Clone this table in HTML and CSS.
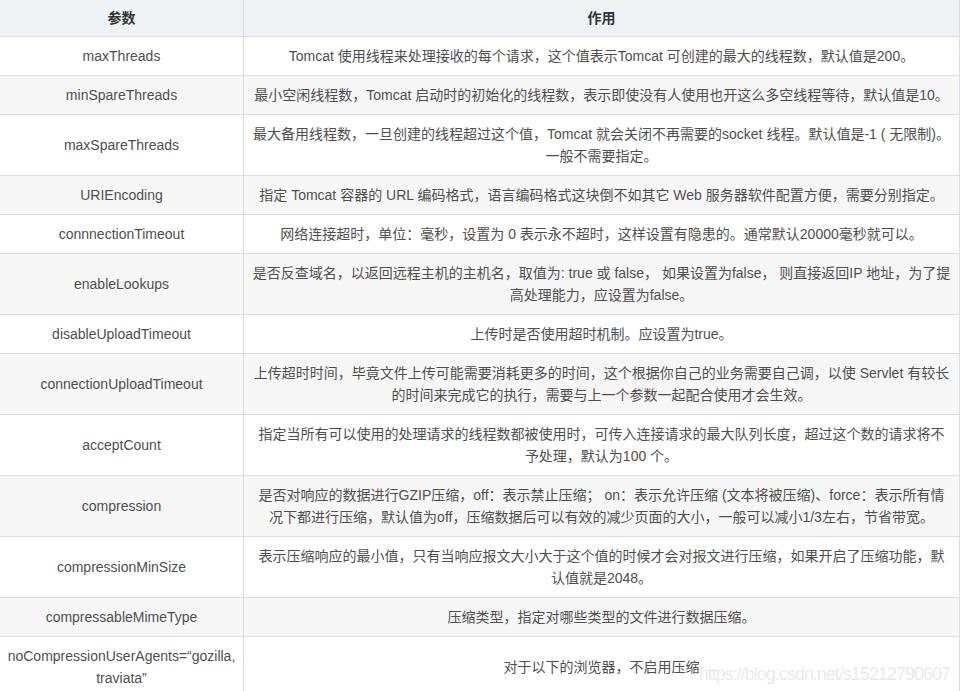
FILE: index.html
```html
<!DOCTYPE html>
<html lang="zh-CN">
<head>
<meta charset="utf-8">
<title>Tomcat 参数</title>
<link rel="stylesheet" href="styles.css">
</head>
<body>
<div class="page">
<table class="params">
  <colgroup><col class="col-name"><col class="col-desc"></colgroup>
  <thead>
    <tr><th>参数</th><th>作用</th></tr>
  </thead>
  <tbody>
    <tr><td>maxThreads</td><td>Tomcat 使用线程来处理接收的每个请求，这个值表示Tomcat 可创建的最大的线程数，默认值是200。</td></tr>
    <tr><td>minSpareThreads</td><td>最小空闲线程数，Tomcat 启动时的初始化的线程数，表示即使没有人使用也开这么多空线程等待，默认值是10。</td></tr>
    <tr><td>maxSpareThreads</td><td>最大备用线程数，一旦创建的线程超过这个值，Tomcat 就会关闭不再需要的socket 线程。默认值是-1 ( 无限制)。<br>一般不需要指定。</td></tr>
    <tr><td>URIEncoding</td><td>指定 Tomcat 容器的 URL 编码格式，语言编码格式这块倒不如其它 Web 服务器软件配置方便，需要分别指定。</td></tr>
    <tr><td>connnectionTimeout</td><td>网络连接超时，单位：毫秒，设置为 0 表示永不超时，这样设置有隐患的。通常默认20000毫秒就可以。</td></tr>
    <tr><td>enableLookups</td><td>是否反查域名，以返回远程主机的主机名，取值为: true 或 false， 如果设置为false， 则直接返回IP 地址，为了提<br>高处理能力，应设置为false。</td></tr>
    <tr><td>disableUploadTimeout</td><td>上传时是否使用超时机制。应设置为true。</td></tr>
    <tr><td>connectionUploadTimeout</td><td>上传超时时间，毕竟文件上传可能需要消耗更多的时间，这个根据你自己的业务需要自己调，以使 Servlet 有较长<br>的时间来完成它的执行，需要与上一个参数一起配合使用才会生效。</td></tr>
    <tr><td>acceptCount</td><td>指定当所有可以使用的处理请求的线程数都被使用时，可传入连接请求的最大队列长度，超过这个数的请求将不<br>予处理，默认为100 个。</td></tr>
    <tr><td>compression</td><td>是否对响应的数据进行GZIP压缩，off：表示禁止压缩； on：表示允许压缩 (文本将被压缩)、force：表示所有情<br>况下都进行压缩，默认值为off，压缩数据后可以有效的减少页面的大小，一般可以减小1/3左右，节省带宽。</td></tr>
    <tr><td>compressionMinSize</td><td>表示压缩响应的最小值，只有当响应报文大小大于这个值的时候才会对报文进行压缩，如果开启了压缩功能，默<br>认值就是2048。</td></tr>
    <tr><td>compressableMimeType</td><td>压缩类型，指定对哪些类型的文件进行数据压缩。</td></tr>
    <tr><td class="tight">noCompressionUserAgents=“gozilla,<br>traviata”</td><td>对于以下的浏览器，不启用压缩</td></tr>
  </tbody>
</table>
<div class="watermark">https://blog.csdn.net/s15212790607</div>
</div>
</body>
</html>
```
FILE: styles.css
```css
html, body {
  margin: 0;
  padding: 0;
  background: #ffffff;
}
.page {
  position: relative;
  width: 960px;
  height: 691px;
  overflow: hidden;
}
.params {
  border-collapse: collapse;
  table-layout: fixed;
  width: 961px;
  margin: -1px 0 0 -1px;
  font-family: "Liberation Sans", "Noto Sans CJK SC", sans-serif;
  font-size: 14px;
  line-height: 22px;
  color: #4f4f4f;
}
.col-name { width: 244px; }
.params th,
.params td {
  border: 1px solid #dddddd;
  text-align: center;
  vertical-align: middle;
  padding: 8px 8px;
}
.params td.tight {
  padding-left: 4px;
  padding-right: 4px;
  white-space: nowrap;
}
.params th {
  background: #eff3f5;
  color: #333333;
  font-weight: bold;
  padding: 7px 8px;
}
.params tbody tr:nth-child(even) td {
  background: #f7f7f7;
}
.watermark {
  position: absolute;
  right: 10px;
  bottom: 6px;
  font-family: "Liberation Sans", sans-serif;
  font-size: 18px;
  letter-spacing: -1px;
  color: rgba(150, 150, 150, 0.22);
  white-space: nowrap;
}
```
